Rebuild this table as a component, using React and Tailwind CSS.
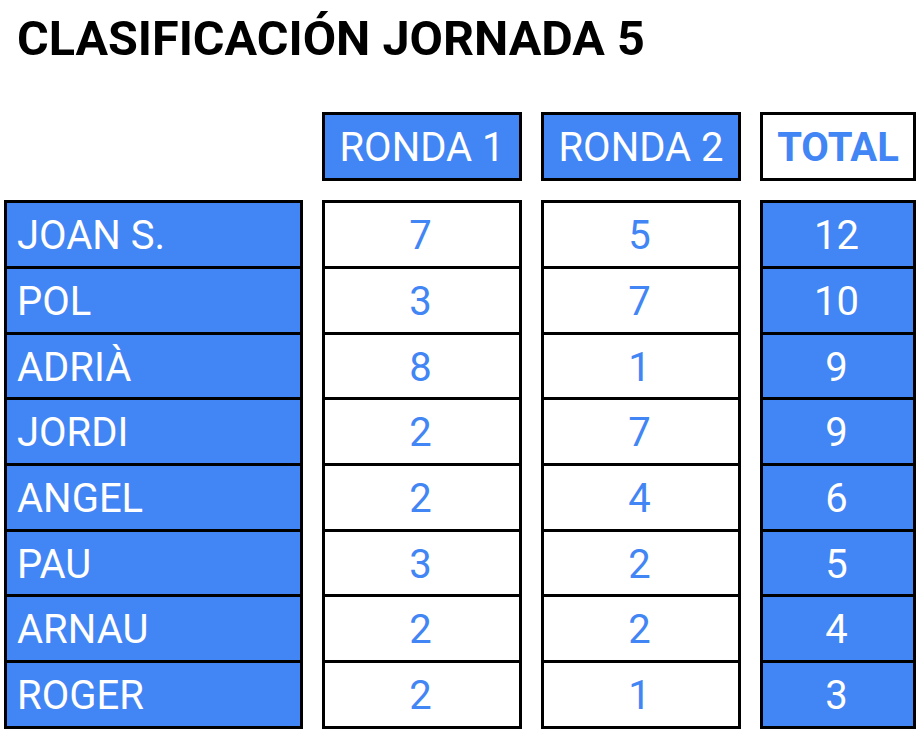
const rows = [
  ["JOAN S.", 7, 5, 12],
  ["POL", 3, 7, 10],
  ["ADRIÀ", 8, 1, 9],
  ["JORDI", 2, 7, 9],
  ["ANGEL", 2, 4, 6],
  ["PAU", 3, 2, 5],
  ["ARNAU", 2, 2, 4],
  ["ROGER", 2, 1, 3],
];

const font = { fontFamily: "Roboto, 'Liberation Sans', sans-serif" };

function Cell({ children, i, variant, align }) {
  const base =
    "flex items-center pt-[3px] text-[40px] leading-none border-black border-x-[3px] border-b-[3px]";
  const first = i === 0 ? " border-t-[3px] h-[69px]" : " h-[65.7px]";
  const color =
    variant === "blue" ? " bg-[#4285f4] text-white" : " bg-white text-[#4285f4]";
  const al = align === "left" ? " justify-start pl-[10px]" : " justify-center pr-[3px]";
  return <div className={base + first + color + al}>{children}</div>;
}

export default function App() {
  return (
    <div className="w-[919px] h-[731px] bg-white overflow-hidden" style={font}>
      <h1 className="pl-[17px] pt-[15px] h-[62px] text-[48.5px] font-bold leading-none text-black">
        CLASIFICACIÓN JORNADA 5
      </h1>
      <div className="flex gap-x-[19px] pl-[4px] mt-[50px]">
        <div className="flex flex-col w-[299px]">
          <div className="h-[69px] mb-[19px]" />
          {rows.map((r, i) => (
            <Cell key={i} i={i} variant="blue" align="left">
              {r[0]}
            </Cell>
          ))}
        </div>
        <div className="flex flex-col w-[200px]">
          <div className="h-[69px] mb-[19px] pt-[3px] border-[3px] border-black bg-[#4285f4] text-white text-[40px] leading-none flex items-center justify-center">
            RONDA 1
          </div>
          {rows.map((r, i) => (
            <Cell key={i} i={i}>
              {r[1]}
            </Cell>
          ))}
        </div>
        <div className="flex flex-col w-[200px]">
          <div className="h-[69px] mb-[19px] pt-[3px] border-[3px] border-black bg-[#4285f4] text-white text-[40px] leading-none flex items-center justify-center">
            RONDA 2
          </div>
          {rows.map((r, i) => (
            <Cell key={i} i={i}>
              {r[2]}
            </Cell>
          ))}
        </div>
        <div className="flex flex-col w-[156px]">
          <div className="h-[69px] mb-[19px] pt-[3px] border-[3px] border-black bg-white text-[#4285f4] font-bold text-[40px] leading-none flex items-center justify-center">
            TOTAL
          </div>
          {rows.map((r, i) => (
            <Cell key={i} i={i} variant="blue">
              {r[3]}
            </Cell>
          ))}
        </div>
      </div>
    </div>
  );
}
